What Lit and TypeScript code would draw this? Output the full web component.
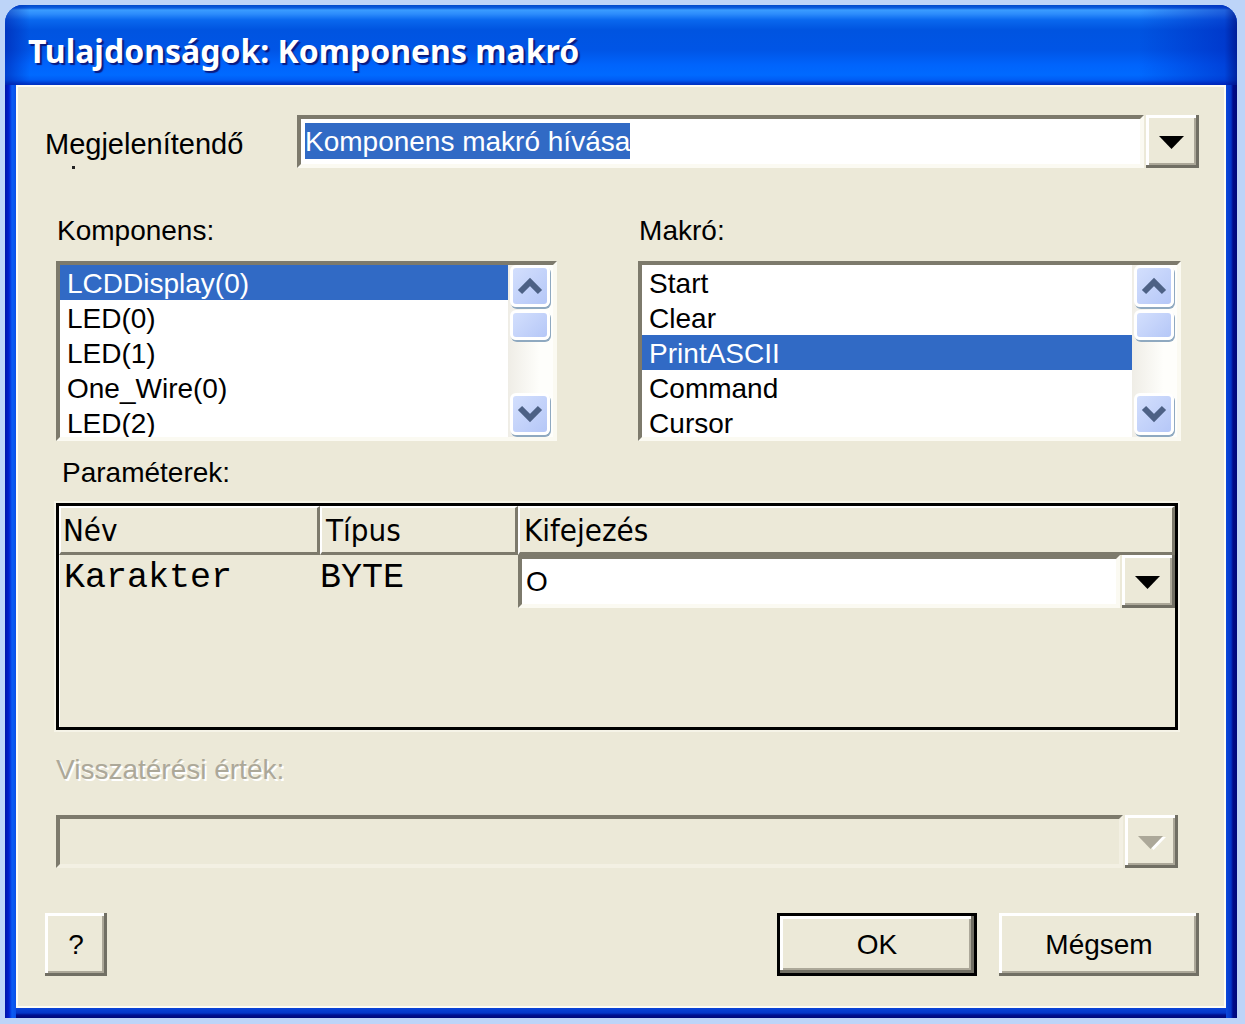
import { LitElement, html, css, svg } from "lit";
import { customElement, property } from "lit/decorators.js";
import { classMap } from "lit/directives/class-map.js";

const bevel = css`
  .raised {
    box-sizing: border-box;
    border: 0;
    background: #ece9d8;
    box-shadow:
      inset -3px -3px 0 #716f64,
      inset 3px 3px 0 #ffffff,
      inset -5px -5px 0 #aca899;
    color: #000;
    font-family: inherit;
    font-size: inherit;
    line-height: 36px;
    padding: 0;
  }
  .sunken {
    box-sizing: border-box;
    border: 4px solid;
    border-color: #7d7a6c #fbfaf2 #fbfaf2 #7d7a6c;
    background: #fff;
  }
`;

@customElement("combo-field")
class ComboField extends LitElement {
  @property() label = "";
  @property() value = "";
  @property({ type: Boolean }) highlighted = false;
  @property({ type: Boolean }) disabled = false;

  static styles = [
    bevel,
    css`
      :host {
        display: block;
      }
      .combo {
        display: flex;
        gap: 2px;
        height: 53px;
      }
      .box {
        flex: 1;
        min-width: 0;
        display: flex;
        align-items: flex-start;
        padding: 4px 4px 0;
      }
      .box.off {
        background: #ece9d8;
        border-color: #7d7a6c #f3f0e3 #f3f0e3 #7d7a6c;
      }
      .choice {
        appearance: none;
        field-sizing: content;
        border: 0;
        border-radius: 0;
        margin: 0;
        padding: 0;
        height: 36px;
        line-height: 38px;
        font-family: inherit;
        font-size: inherit;
        color: #000;
        background: transparent;
        outline: none;
      }
      .choice.lit {
        color: #fff;
        background: #316ac5;
      }
      .arrow {
        flex: none;
        width: 53px;
        display: grid;
        place-items: center;
      }
      .glyph {
        display: block;
      }
    `,
  ];

  private open() {
    const s = this.renderRoot.querySelector("select") as any;
    s?.focus();
    s?.showPicker?.();
  }

  render() {
    return html`<div class="combo">
      <div class=${classMap({ box: true, sunken: true, off: this.disabled })}>
        <select
          class=${classMap({ choice: true, lit: this.highlighted })}
          aria-label=${this.label}
          ?disabled=${this.disabled}
        >
          <option>${this.value}</option>
        </select>
      </div>
      <button class="arrow raised" aria-label=${this.label} ?disabled=${this.disabled} @click=${this.open}>
        <svg class="glyph" width="28" height="16" viewBox="0 0 28 16" aria-hidden="true">
          ${this.disabled ? svg`<path d="M3 3H28L15.500 16Z" fill="#fff" />` : null}
          <path d="M0 2H25L12.500 15Z" fill=${this.disabled ? "#aca899" : "#000"} />
        </svg>
      </button>
    </div>`;
  }
}

@customElement("scroll-list")
class ScrollList extends LitElement {
  @property() label = "";
  @property() selected = "";
  @property({ attribute: false }) items: string[] = [];

  static styles = [
    bevel,
    css`
      :host {
        display: block;
      }
      .caption {
        display: block;
        line-height: 36px;
        margin-bottom: 12px;
        padding-left: 1px;
      }
      .frame {
        display: flex;
        height: 180px;
      }
      .list {
        flex: 1;
        min-width: 0;
        height: 100%;
        margin: 0;
        padding: 0;
        border: 0;
        border-radius: 0;
        outline: none;
        background: #fff;
        color: #000;
        font-family: inherit;
        font-size: inherit;
        overflow-y: scroll;
        scrollbar-width: none;
      }
      .list::-webkit-scrollbar {
        display: none;
      }
      .item {
        box-sizing: border-box;
        height: 35px;
        min-height: 35px;
        line-height: 32px;
        padding: 3px 7px 0;
        color: #000;
      }
      .item:checked {
        background: #316ac5 linear-gradient(#316ac5, #316ac5);
        color: #fff !important;
      }
      .bar {
        flex: none;
        width: 45px;
        box-sizing: border-box;
        padding: 0 3px 2px 2px;
        display: flex;
        flex-direction: column;
        gap: 3px;
        background: linear-gradient(90deg, #efede6, #fefefb 70%);
      }
      .step,
      .thumb {
        box-sizing: border-box;
        border: 3px solid #fff;
        border-radius: 6px;
        background: linear-gradient(135deg, #d3dffd, #b5c7f7);
        box-shadow: 1px 2px 0 #8fa9c0;
        padding: 0;
      }
      .step {
        height: 42px;
        display: grid;
        place-items: center;
      }
      .thumb {
        height: 30px;
      }
      .down {
        margin-top: auto;
      }
    `,
  ];

  private move(rows: number) {
    this.renderRoot.querySelector("select")?.scrollBy(0, rows * 35);
  }

  render() {
    return html`<label class="caption" for="list">${this.label}</label>
      <div class="frame sunken">
        <select class="list" id="list" size="5">
          ${this.items.map(
            (i) => html`<option class="item" ?selected=${i === this.selected}>${i}</option>`
          )}
        </select>
        <div class="bar">
          <button class="step" aria-label="Fel" @click=${() => this.move(-1)}>
            <svg width="26" height="18" viewBox="0 0 26 18" aria-hidden="true">
              <path d="M3 15L13 5L23 15" fill="none" stroke="#4d6185" stroke-width="6" />
            </svg>
          </button>
          <div class="thumb"></div>
          <button class="step down" aria-label="Le" @click=${() => this.move(1)}>
            <svg width="26" height="18" viewBox="0 0 26 18" aria-hidden="true">
              <path d="M3 3L13 13L23 3" fill="none" stroke="#4d6185" stroke-width="6" />
            </svg>
          </button>
        </div>
      </div>`;
  }
}

@customElement("app-root")
class AppRoot extends LitElement {
  static styles = [
    bevel,
    css`
      :host {
        display: block;
        box-sizing: border-box;
        min-height: 100vh;
        padding: 5px 8px 6px 5px;
        background: #bdd4f8;
        font-family: "Liberation Sans", Arial, sans-serif;
        font-size: 28px;
        color: #000;
      }
      .window {
        border-radius: 18px 18px 0 0;
        overflow: hidden;
        background: #0a3fd0;
      }
      .title {
        height: 80px;
        box-sizing: border-box;
        padding: 23px 23px 0;
        background:
          linear-gradient(90deg, #0018a080, #0018a000 2%, #0018a000 92%, #0018b070 99%, #000c80c0),
          linear-gradient(
            #0048c8 0,
            #0a5ce0 3px,
            #3a9cff 5px,
            #2c8cfc 9px,
            #0a68ee 15px,
            #0054e0 25px,
            #0055e6 45px,
            #0064fc 60px,
            #006aff 70px,
            #005cf4 75px,
            #0034c4 79px
          );
      }
      .heading {
        margin: 0;
        font-family: "Noto Sans", "Open Sans", sans-serif;
        font-size: 32px;
        font-weight: 700;
        line-height: 46px;
        color: #fff;
        text-shadow: 2px 2px 1px #0a1a80;
        white-space: nowrap;
      }
      .edge {
        padding: 0 11px 10px;
        background:
          linear-gradient(90deg, #0014a8 0, #0020d0 4px, #0a5cf4 7px, #0a50e8 11px, #0000 11px),
          linear-gradient(270deg, #000878 0, #000c8c 4px, #0436c8 6px, #0a48dc 11px, #0000 11px),
          linear-gradient(0deg, #000878 0, #001090 3px, #0436c8 5px, #0a44d8 10px);
      }
      .body {
        box-sizing: border-box;
        background: #ece9d8;
        border: 2px solid #fdfcf4;
        padding: 28px 25px 30px 27px;
      }
      .display {
        display: grid;
        grid-template-columns: 252px 1fr;
      }
      .hint {
        line-height: 36px;
        padding-top: 11px;
        font-size: 29px;
      }
      .hint::after {
        content: "";
        display: block;
        width: 3px;
        height: 3px;
        margin: 4px 0 0 27px;
        background: #222;
      }
      .inner {
        padding: 0 21px 0 11px;
      }
      .lists {
        display: grid;
        grid-template-columns: 12fr 13fr;
        gap: 81px;
        padding: 44px 18px 0 11px;
      }
      .caption {
        display: block;
        line-height: 36px;
        margin: 0;
        font-size: inherit;
        font-weight: 400;
      }
      .params {
        padding: 14px 0 12px 6px;
      }
      .panel {
        box-sizing: border-box;
        min-height: 227px;
        border: 3px solid #000;
        box-shadow: 0 0 0 2px #f6f4e8, inset 1px 0 0 #fff;
      }
      .grid {
        width: 100%;
        border-collapse: separate;
        border-spacing: 0;
        table-layout: fixed;
      }
      .name {
        width: 261px;
      }
      .type {
        width: 198px;
      }
      .head {
        box-sizing: border-box;
        height: 49px;
        padding: 0 4px;
        border: solid;
        border-width: 2px 3px 3px 2px;
        border-color: #fff #7d7a6c #7d7a6c #fff;
        text-align: left;
        font-family: "DejaVu Sans Condensed", "DejaVu Sans", sans-serif;
        font-size: 31px;
        font-weight: 400;
        line-height: 44px;
      }
      .head.name {
        padding-left: 2px;
      }
      .cell {
        padding: 0 5px;
        font-family: "Liberation Mono", "Courier New", monospace;
        font-size: 35px;
        line-height: 46px;
        vertical-align: top;
      }
      .cell.flush {
        padding: 0;
      }
      .expr {
        font-family: "Liberation Sans", Arial, sans-serif;
        font-size: 28px;
        line-height: 36px;
      }
      .result {
        color: #aca899;
        text-shadow: 2px 2px 0 #fff;
        padding: 22px 0 27px;
      }
      .actions {
        display: flex;
        gap: 22px;
        margin-top: 45px;
      }
      .btn {
        height: 63px;
        width: 200px;
      }
      .btn.help {
        width: 62px;
        margin-right: auto;
      }
      .btn.ok {
        border: 3px solid #000;
      }
    `,
  ];

  render() {
    return html`<div class="window">
      <header class="title"><h1 class="heading">Tulajdonságok: Komponens makró</h1></header>
      <div class="edge">
        <main class="body">
          <div class="display">
            <label class="hint" for="shown">Megjelenítendő</label>
            <combo-field id="shown" label="Megjelenítendő" value="Komponens makró hívása" highlighted></combo-field>
          </div>
          <div class="lists">
            <scroll-list
              label="Komponens:"
              selected="LCDDisplay(0)"
              .items=${["LCDDisplay(0)", "LED(0)", "LED(1)", "One_Wire(0)", "LED(2)"]}
            ></scroll-list>
            <scroll-list
              label="Makró:"
              selected="PrintASCII"
              .items=${["Start", "Clear", "PrintASCII", "Command", "Cursor"]}
            ></scroll-list>
          </div>
          <div class="inner">
            <h2 class="caption params">Paraméterek:</h2>
            <div class="panel">
              <table class="grid">
                <thead>
                  <tr>
                    <th class="head name">Név</th>
                    <th class="head type">Típus</th>
                    <th class="head">Kifejezés</th>
                  </tr>
                </thead>
                <tbody>
                  <tr>
                    <td class="cell">Karakter</td>
                    <td class="cell flush">BYTE</td>
                    <td class="cell flush">
                      <combo-field class="expr" label="Kifejezés" value="O"></combo-field>
                    </td>
                  </tr>
                </tbody>
              </table>
            </div>
            <label class="caption result" for="result">Visszatérési érték:</label>
            <combo-field id="result" label="Visszatérési érték" value="" disabled></combo-field>
          </div>
          <div class="actions">
            <button class="btn help raised">?</button>
            <button class="btn ok raised">OK</button>
            <button class="btn raised">Mégsem</button>
          </div>
        </main>
      </div>
    </div>`;
  }
}
